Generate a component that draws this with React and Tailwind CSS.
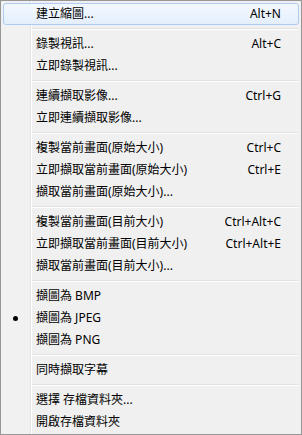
import React from "react";

const items = [
  { label: "建立縮圖...", key: "Alt+N", active: true },
  { sep: true },
  { label: "錄製視訊...", key: "Alt+C" },
  { label: "立即錄製視訊..." },
  { sep: true },
  { label: "連續擷取影像...", key: "Ctrl+G" },
  { label: "立即連續擷取影像..." },
  { sep: true },
  { label: "複製當前畫面(原始大小)", key: "Ctrl+C" },
  { label: "立即擷取當前畫面(原始大小)", key: "Ctrl+E" },
  { label: "擷取當前畫面(原始大小)..." },
  { sep: true },
  { label: "複製當前畫面(目前大小)", key: "Ctrl+Alt+C" },
  { label: "立即擷取當前畫面(目前大小)", key: "Ctrl+Alt+E" },
  { label: "擷取當前畫面(目前大小)..." },
  { sep: true },
  { label: "擷圖為 BMP" },
  { label: "擷圖為 JPEG", checked: true },
  { label: "擷圖為 PNG" },
  { sep: true },
  { label: "同時擷取字幕" },
  { sep: true },
  { label: "選擇 存檔資料夾..." },
  { label: "開啟存檔資料夾" },
];

const MenuRow = ({ item }) => {
  if (item.sep) {
    return (
      <div className="h-[8px] flex flex-col justify-center pl-[29px] pr-[1px]">
        <div className="h-px bg-[#e0e0e0]" />
        <div className="h-px bg-white" />
      </div>
    );
  }

  return (
    <div
      className={
        "h-[22px] flex items-center rounded-[3px] border " +
        (item.active
          ? "border-[#aeccf1] bg-[linear-gradient(to_bottom,#f3f8fe,#e4effc)]"
          : "border-transparent")
      }
    >
      <div className="w-[32px] flex items-center pl-[9px]">
        {item.checked && <span className="w-[5px] h-[5px] rounded-full bg-black" />}
      </div>
      <span className="flex-1 whitespace-nowrap">{item.label}</span>
      {item.key && <span className="pr-[17px] whitespace-nowrap">{item.key}</span>}
    </div>
  );
};

const App = () => {
  return (
    <div
      className="w-[302px] h-[435px] border border-[#979797] pt-[2px] pb-[1px] px-[2px] text-[12px] leading-[22px] text-black bg-[linear-gradient(to_right,#f1f1f1_29px,#e2e3e3_29px,#e2e3e3_30px,#ffffff_30px,#ffffff_31px,#f0f0f0_31px)]"
      style={{ fontFamily: '"Noto Sans", "Noto Sans CJK TC", sans-serif' }}
    >
      {items.map((item, i) => (
        <MenuRow key={i} item={item} />
      ))}
    </div>
  );
};

export default App;
